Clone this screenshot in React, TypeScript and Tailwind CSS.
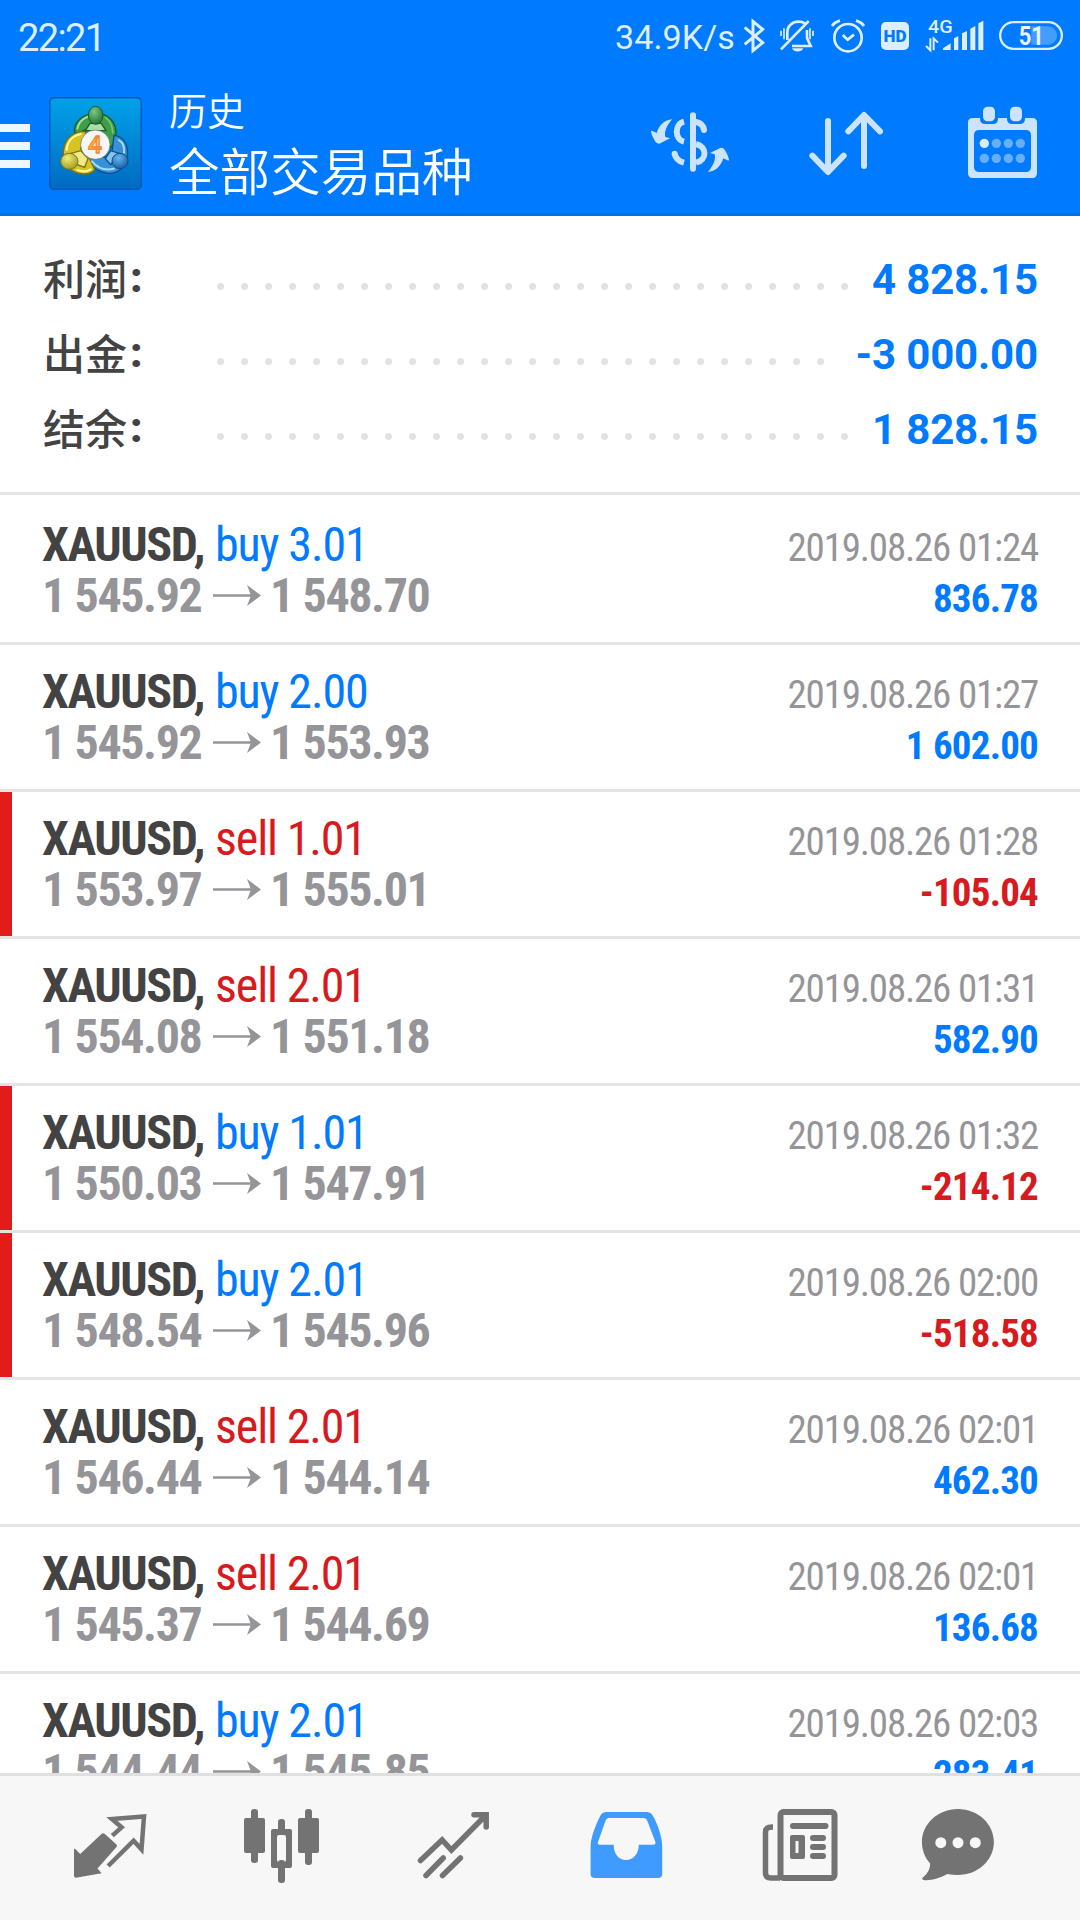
import React from 'react';

interface Deal {
  side: 'buy' | 'sell';
  volume: string;
  open: string;
  close: string;
  time: string;
  profit: string;
}

const SUMMARY = [
  { label: '利润', value: '4 828.15', dots: 27 },
  { label: '出金', value: '-3 000.00', dots: 26 },
  { label: '结余', value: '1 828.15', dots: 27 },
];

const DEALS: Deal[] = [
  { side: 'buy', volume: '3.01', open: '1 545.92', close: '1 548.70', time: '2019.08.26 01:24', profit: '836.78' },
  { side: 'buy', volume: '2.00', open: '1 545.92', close: '1 553.93', time: '2019.08.26 01:27', profit: '1 602.00' },
  { side: 'sell', volume: '1.01', open: '1 553.97', close: '1 555.01', time: '2019.08.26 01:28', profit: '-105.04' },
  { side: 'sell', volume: '2.01', open: '1 554.08', close: '1 551.18', time: '2019.08.26 01:31', profit: '582.90' },
  { side: 'buy', volume: '1.01', open: '1 550.03', close: '1 547.91', time: '2019.08.26 01:32', profit: '-214.12' },
  { side: 'buy', volume: '2.01', open: '1 548.54', close: '1 545.96', time: '2019.08.26 02:00', profit: '-518.58' },
  { side: 'sell', volume: '2.01', open: '1 546.44', close: '1 544.14', time: '2019.08.26 02:01', profit: '462.30' },
  { side: 'sell', volume: '2.01', open: '1 545.37', close: '1 544.69', time: '2019.08.26 02:01', profit: '136.68' },
  { side: 'buy', volume: '2.01', open: '1 544.44', close: '1 545.85', time: '2019.08.26 02:03', profit: '283.41' },
];

const StatusBar: React.FC = () => (
  <div className="flex h-[72px] shrink-0 items-start pr-4 pl-[18px] text-[#dceeff]">
    <span className="mt-[12px] text-[38px] leading-[52px] tracking-[-1.6px]">22:21</span>
    <span className="mt-[11px] ml-auto text-[34px] leading-[52px] tracking-[0.1px]">34.9K/s</span>
    <svg className="mt-4 ml-[7px] h-10 w-6" viewBox="0 0 72 120" fill="none" stroke="currentColor" strokeWidth="9">
      <path d="M8 34L62 80L33 104V16L62 40L8 85" />
    </svg>
    <svg className="mt-4 ml-3 h-10 w-[38px]" viewBox="0 0 114 120" fill="none" stroke="currentColor" strokeWidth="8">
      <path d="M28 72V50C28 28 44 17 62 17C70 17 76 19 80 22M87 42V66L98 90H42M9 100L92 15" />
      <path d="M42 97H76C71 110 47 110 42 97Z" fill="currentColor" stroke="none" />
      <path d="M9 44V60M18 37V70M96 37V70M105 44V60" strokeWidth="5" />
    </svg>
    <svg className="mt-4 ml-[14px] h-10 w-9" viewBox="0 0 108 120" fill="none" stroke="currentColor" strokeWidth="8">
      <circle cx="54" cy="65" r="41" />
      <path d="M6 30Q14 18 30 14M78 14Q94 18 102 30M38 57L53 71L72 56" />
    </svg>
    <span className="mt-[22px] ml-[15px] flex h-7 w-7 items-center justify-center rounded-[5px] bg-[#dceeff] text-[17px] leading-none font-black text-[#007aff]">
      HD
    </span>
    <svg className="mt-4 ml-4 h-10 w-[60px]" viewBox="0 0 180 120" fill="currentColor">
      <text x="9" y="50" fontSize="53" fontWeight="500" textLength="74" lengthAdjust="spacingAndGlyphs">4G</text>
      <path d="M3 90L16 103V67M26 103V67L39 80" fill="none" stroke="currentColor" strokeWidth="6" />
      <path d="M54 102V97L77 82V102ZM87 102V67L100 60V102ZM111 102V52L126 45V102ZM136 102V38L151 30V102ZM160 102V22L175 14V102Z" />
    </svg>
    <svg className="mt-4 ml-[13px] h-10 w-[66px]" viewBox="0 0 198 120" fill="currentColor">
      <rect x="6.500" y="18.500" width="185" height="80" rx="40" fill="none" stroke="currentColor" strokeWidth="7" />
      <path d="M100 31H150A27 27 0 0 1 150 86H100Z" opacity="0.3" />
      <text x="62" y="87" fontSize="76" fontWeight="700" fill="#e8f4ff" textLength="76" lengthAdjust="spacingAndGlyphs">51</text>
    </svg>
  </div>
);

const AppLogo: React.FC = () => (
  <svg className="mt-[25px] ml-[19px] h-[93px] w-[93px]" viewBox="27 21 279 279">
    <defs>
      <linearGradient id="tile" x1="0" y1="0" x2="0" y2="1">
        <stop offset="0" stopColor="#00a2ea" />
        <stop offset="1" stopColor="#006bc0" />
      </linearGradient>
      <radialGradient id="greenHead" cx="0.4" cy="0.3" r="0.8">
        <stop offset="0" stopColor="#7cc98a" />
        <stop offset="1" stopColor="#17692c" />
      </radialGradient>
      <radialGradient id="yellowHead" cx="0.4" cy="0.3" r="0.8">
        <stop offset="0" stopColor="#f3ee75" />
        <stop offset="1" stopColor="#96941a" />
      </radialGradient>
      <radialGradient id="blueHead" cx="0.4" cy="0.3" r="0.8">
        <stop offset="0" stopColor="#69b6ee" />
        <stop offset="1" stopColor="#0e569f" />
      </radialGradient>
    </defs>
    <rect x="29" y="23" width="275" height="275" rx="14" fill="url(#tile)" stroke="#0758b8" strokeWidth="5" />
    <g strokeWidth="4" strokeLinejoin="round">
      {/* green, blue and yellow figures, each an arc that tapers behind the badge */}
      <path d="M104 128C100 96 130 70 167 70C206 70 230 98 228 134C226 156 216 172 200 184L186 150L150 112L118 128Z" fill="#3f9f48" stroke="#195e25" />
      <path d="M222 136C252 140 266 166 262 200C258 232 232 252 204 250C172 246 148 226 138 196L180 200L214 204Z" fill="#3592d9" stroke="#0b4f91" />
      <path d="M138 124C98 124 72 146 70 188C70 226 96 252 132 252C146 252 158 248 164 238L146 200L122 176Z" fill="#d6c422" stroke="#7b710f" />
    </g>
    <g fill="none" strokeLinecap="round">
      <path d="M112 116C116 96 128 86 144 80" stroke="#a5dea0" strokeWidth="6" />
      <path d="M196 82C210 92 218 108 218 128" stroke="#79c67a" strokeWidth="5" />
      <path d="M156 214C172 234 196 242 222 236M236 150C250 158 254 172 252 188" stroke="#a8dcfa" strokeWidth="6" />
      <path d="M80 180C82 152 98 138 122 132M112 240C126 246 142 244 152 238" stroke="#fbf7a4" strokeWidth="6" />
    </g>
    <path d="M92 190L122 182L144 206L134 232L112 224Z" fill="#f0e98a" stroke="#7b710f" strokeWidth="4" />
    <path d="M238 190L212 182L196 206L212 224Z" fill="#83c5ef" stroke="#0b4f91" strokeWidth="4" />
    <path d="M150 100L184 100L198 122L136 122Z" fill="#a9dca6" stroke="#195e25" strokeWidth="4" />
    <ellipse cx="167" cy="76" rx="22" ry="27" fill="url(#greenHead)" stroke="#175d28" strokeWidth="3" />
    <ellipse cx="88" cy="214" rx="26" ry="24" fill="url(#yellowHead)" stroke="#79751a" strokeWidth="3" />
    <ellipse cx="240" cy="213" rx="24" ry="23" fill="url(#blueHead)" stroke="#0d4c8c" strokeWidth="3" />
    <circle cx="166" cy="164" r="44" fill="#f7f7fb" stroke="#5d6b4c" strokeWidth="2" />
    <text x="165" y="190" textAnchor="middle" fontSize="74" fontWeight="500" fill="#fbc98f" stroke="#f38a2c" strokeWidth="4">4</text>
  </svg>
);

const TitleBar: React.FC = () => (
  <div className="flex h-[144px] items-start border-b-[3px] border-[#006fe8] pr-9">
    <div className="mt-[52px] flex w-[30px] flex-col gap-[10px]">
      <div className="h-2 bg-[#eef6ff]" />
      <div className="h-2 bg-[#eef6ff]" />
      <div className="h-2 bg-[#eef6ff]" />
    </div>
    <AppLogo />
    <div className="mt-[15px] ml-[27px] flex flex-col font-['Noto_Sans_CJK_SC',sans-serif] font-[350] whitespace-nowrap text-white">
      <span className="text-[38px] leading-[44px]">历史</span>
      <span className="text-[50.6px] leading-[76px]">全部交易品种</span>
    </div>
    <svg className="mt-7 ml-auto h-20 w-20" viewBox="0 0 240 240" fill="none" stroke="#cce4ff" strokeWidth="18">
      <path d="M129 46V206" strokeLinecap="round" />
      <path d="M102 65C73 72 73 118 102 125M74 160C76 174 86 184 102 188" />
      <path d="M74 162V161M138 66C150 68 160 76 162 90" strokeLinecap="round" />
      <path d="M138 132C172 140 172 180 138 188" />
      <path d="M66 58C50 78 42 95 46 111L60 115L28 131Q18 132 12 118Q4 104 3 95Q3 90 9 94L20 99C28 74 44 60 66 58Z" fill="#cce4ff" stroke="none" />
      <path d="M66 58C50 78 42 95 46 111L60 115L28 131Q18 132 12 118Q4 104 3 95Q3 90 9 94L20 99C28 74 44 60 66 58Z" fill="#cce4ff" stroke="none" transform="rotate(180 120 137)" />
    </svg>
    <svg className="mt-7 ml-[78px] h-20 w-20" viewBox="0 0 240 240" fill="none" stroke="#cce4ff" strokeWidth="18" strokeLinecap="round" strokeLinejoin="round">
      <path d="M60 63V214M13 167L60 216L107 167M168 198V47M121 94L168 45L216 94" />
    </svg>
    <svg className="mt-7 ml-[76px] h-20 w-20" viewBox="0 0 240 240" fill="#cce4ff">
      <path fillRule="evenodd" d="M26 54H205Q219 54 219 68V220Q219 234 205 234H26Q12 234 12 220V68Q12 54 26 54ZM46 90Q30 90 30 106V200Q30 216 46 216H185Q201 216 201 200V106Q201 90 185 90Z" />
      <path d="M48 50H102V56Q102 72 86 72H64Q48 72 48 56ZM129 50H183V56Q183 72 167 72H145Q129 72 129 56Z" fill="#007aff" />
      <rect x="57" y="20" width="36" height="44" rx="14" />
      <rect x="138" y="20" width="36" height="44" rx="14" />
      <circle cx="61" cy="130" r="14" fill="#d9ecff" />
      {[97, 133, 169].map((x) => (
        <circle key={x} cx={x} cy="130" r="14" fill="#66afff" />
      ))}
      {[61, 97, 133, 169].map((x) => (
        <circle key={x} cx={x} cy="175" r="14" fill="#66afff" />
      ))}
    </svg>
  </div>
);

const Summary: React.FC = () => (
  <div className="h-[279px] shrink-0 border-b-[3px] border-[#e4e4e4] px-[42px] pt-[26px]">
    {SUMMARY.map((row) => (
      <div key={row.label} className="flex h-[75px] items-center">
        <div className="flex w-[175px] items-center pb-[6px] pl-px text-[#434343]">
          <span className="font-['Noto_Sans_CJK_SC',sans-serif] text-[42px] leading-[60px] font-medium">{row.label}</span>
          <span className="ml-[3px] pt-[3px] text-[42px] leading-[60px] font-black">:</span>
        </div>
        <div className="flex gap-[17px] pt-[14px]">
          {Array.from({ length: row.dots }, (_, i) => (
            <div key={i} className="h-[7px] w-[7px] rounded-full bg-[#e2e2e2]" />
          ))}
        </div>
        <span className="ml-auto text-[42px] leading-[75px] font-bold tracking-[-0.15px] whitespace-nowrap text-[#007aff]">{row.value}</span>
      </div>
    ))}
  </div>
);

const DealRow: React.FC<{ deal: Deal }> = ({ deal }) => {
  const isLoss = deal.profit.startsWith('-');
  return (
    <div className="flex h-[147px] shrink-0 border-b-[3px] border-[#e4e4e4] pr-[42px] font-['Roboto_Condensed','Roboto',sans-serif] whitespace-nowrap">
      <div className={`w-3 ${isLoss ? 'bg-[#e21b1b]' : 'bg-white'}`} />
      <div className="ml-[30px] pt-[21px] text-[48px] leading-[51px]">
        <div className="flex tracking-[-1.15px]">
          <span className="font-bold tracking-[-1.4px] text-[#434343]">XAUUSD,</span>
          <span className={`ml-[11px] ${deal.side === 'buy' ? 'text-[#007aff]' : 'text-[#d71920]'}`}>
            {deal.side} {deal.volume}
          </span>
        </div>
        <div className="flex items-center font-bold tracking-[-1.4px] text-[#959599]">
          <span className="w-[171px]">{deal.open}</span>
          <svg className="mt-[15px] mb-auto h-[21px] w-12" viewBox="0 0 48 21" fill="currentColor">
            <path d="M0 9.300H37.500L34 0L48 10.500L34 21L37.500 11.700H0Z" />
          </svg>
          <span className="ml-[9px]">{deal.close}</span>
        </div>
      </div>
      <div className="ml-auto pt-[25px] text-right text-[39px] leading-[51px]">
        <div className="tracking-[-1.2px] text-[#959599]">{deal.time}</div>
        <div className={`font-bold tracking-[-0.8px] ${isLoss ? 'text-[#d71920]' : 'text-[#007aff]'}`}>{deal.profit}</div>
      </div>
    </div>
  );
};

const BottomNav: React.FC = () => (
  <div className="flex h-[147px] shrink-0 items-start border-t-[3px] border-[#e0e0e2] bg-[#f7f7f7] pt-6 pl-[70px] text-[#737373]">
    <svg className="h-[90px] w-20" viewBox="0 0 80 90" fill="currentColor">
      <path d="M4.800 48.500L10.200 54L32 33.600Q33.300 32.600 34.600 33.800L46.500 44.500Q47.500 45.700 46.500 47L27.500 68.500L31.600 73.300L6 77.800Q4 77.800 4 75.800V49.500Z" />
      <path d="M42.300 35.700L51.600 27.300L41.900 19L74 16.500L71.500 49.300L63.600 40.700L38.100 66" fill="none" stroke="currentColor" strokeWidth="4.500" />
    </svg>
    <svg className="ml-[92px] h-[90px] w-20" viewBox="0 0 80 90" fill="currentColor">
      <rect x="9" y="9" width="7" height="54" rx="3" />
      <rect x="2" y="18" width="21" height="35" rx="2" />
      <rect x="36" y="19" width="7" height="14" rx="3" />
      <rect x="36" y="60" width="7" height="23" rx="3" />
      <path fillRule="evenodd" d="M31 29H48Q50 29 50 31V66Q50 68 48 68H31Q29 68 29 66V31Q29 29 31 29ZM37 35Q35 35 35 37V60Q35 62 37 62H42Q44 62 44 60V37Q44 35 42 35Z" />
      <rect x="63" y="9" width="7" height="56" rx="3" />
      <rect x="56" y="18" width="21" height="35" rx="2" />
    </svg>
    <svg className="ml-[93px] h-[90px] w-20" viewBox="0 0 80 90" fill="none" stroke="currentColor" strokeWidth="5.500" strokeLinecap="round">
      <path d="M5.500 60.500L27.100 40L36.400 50L71 15M59 14.800H71.200V27" />
      <path d="M11 75.500L28.200 58M27.500 75.500L45.400 58" />
    </svg>
    <svg className="ml-[95px] h-[90px] w-20 text-[#3f9bff]" viewBox="0 0 80 90" fill="currentColor">
      <path fillRule="evenodd" d="M.6 74V46C.6 36 8 20 11 14.500Q12.500 12 16 12H57Q60.500 12 62 14.500C66 20 72.200 36 72.200 46V74Q72.200 78 68 78H5Q.6 78 .6 74ZM19 18Q17 18 15.800 20L8 42Q7 44.700 10 44.700H23.700C23.700 53 28 60 36 60S48.800 53 48.800 44.700H63Q66 44.700 65.400 42L57 20Q56 18 53 18Z" />
    </svg>
    <svg className="ml-[90px] h-[90px] w-20" viewBox="0 0 80 90" fill="none" stroke="currentColor" strokeWidth="6">
      <rect x="20.500" y="12" width="54" height="66" rx="3" />
      <path d="M13 27H12Q5.500 27 5.500 32V73Q5.500 78 11 78H20" strokeWidth="5.500" />
      <path d="M33 26H65.500M53 38H63M53 47H63M53 56H63" strokeLinecap="round" />
      <path fillRule="evenodd" d="M32 35H43Q45 35 45 37V57Q45 59 43 59H32Q30 59 30 57V37Q30 35 32 35ZM35.500 41V53H38.500V41Z" fill="currentColor" stroke="none" />
    </svg>
    <svg className="ml-20 h-[90px] w-20" viewBox="0 0 80 90" fill="currentColor">
      <path d="M37.900 9C58 9 73.900 24 73.900 42S58 75 37.900 75Q32 75 27.500 74C20 78 10 81 3.500 80Q1 79 3 77.500C8 73 10 69 10.200 63.500C5 58 1.900 50 1.900 42C1.900 24 18 9 37.900 9Z" />
      <g fill="#f7f7f7">
        <circle cx="20.800" cy="42.700" r="5.500" />
        <circle cx="38" cy="42.700" r="5.500" />
        <circle cx="55.300" cy="42.700" r="5.500" />
      </g>
    </svg>
  </div>
);

export default function App() {
  return (
    <div className="flex h-[1920px] w-[1080px] flex-col overflow-hidden bg-white font-['Roboto',sans-serif]">
      <header className="shrink-0 bg-[#007aff]">
        <StatusBar />
        <TitleBar />
      </header>
      <Summary />
      <main className="flex min-h-0 flex-1 flex-col overflow-hidden pt-[3px]">
        {DEALS.map((deal, i) => (
          <DealRow key={i} deal={deal} />
        ))}
      </main>
      <BottomNav />
    </div>
  );
}
